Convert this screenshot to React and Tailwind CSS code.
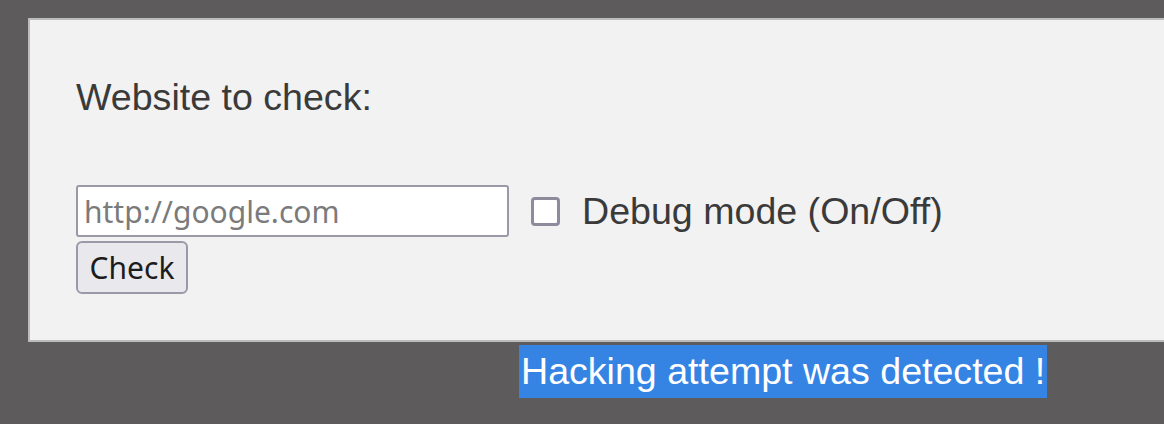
export default function App() {
  return (
    <div className="min-h-screen w-full overflow-hidden bg-[#5d5b5c] pt-[18px] pl-[28px] font-['Liberation_Sans',Arial,sans-serif]">
      <div className="h-[324px] border-2 border-r-0 border-[#bdbcbc] bg-[#f2f2f2] pl-[46px] pt-[56px]">
        <p className="text-[37.6px] leading-[42px] text-[#3a3a3a]">Website to check:</p>
        <div className="mt-[67px] flex items-center">
          <input
            type="text"
            placeholder="http://google.com"
            className="h-[52px] w-[433px] rounded-[3px] border-2 border-[#9b99a8] bg-white px-[6px] font-['Noto_Sans',sans-serif] text-[30px] text-[#222] placeholder:text-[#7b7b7b] focus:outline-none"
          />
          <label className="ml-[22px] flex items-center text-[37.6px] text-[#3a3a3a]">
            <input
              type="checkbox"
              className="h-[29px] w-[29px] appearance-none rounded-[4px] border-[3px] border-[#8e8c9c] bg-white"
            />
            <span className="ml-[22px] leading-[42px]">Debug mode (On/Off)</span>
          </label>
        </div>
        <button className="mt-[4px] h-[53px] w-[112px] rounded-[6px] border-2 border-[#9b99a8] bg-[#e9e8ed] font-['Noto_Sans',sans-serif] text-[30px] text-[#1c1c1c]">
          Check
        </button>
      </div>
      <div className="ml-[491px] mt-[3px]">
        <span className="inline-block h-[53px] bg-[#3584e4] px-[2px] text-[37.6px] leading-[53px] text-white">
          Hacking attempt was detected !
        </span>
      </div>
    </div>
  );
}
